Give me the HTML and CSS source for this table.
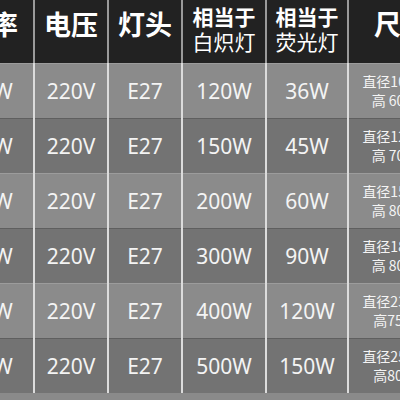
FILE: index.html
```html
<!DOCTYPE html>
<html>
<head>
<meta charset="utf-8">
<link rel="stylesheet" href="styles.css">
</head>
<body>
<div class="table">
  <div class="row head">
    <div class="cell"><span class="h1">功率</span></div>
    <div class="cell"><span class="h1">电压</span></div>
    <div class="cell"><span class="h1">灯头</span></div>
    <div class="cell two"><span class="h2b">相当于</span><span class="h2">白炽灯</span></div>
    <div class="cell two"><span class="h2b">相当于</span><span class="h2">荧光灯</span></div>
    <div class="cell"><span class="h1">尺寸</span></div>
  </div>
  <div class="row light">
    <div class="cell">24W</div><div class="cell">220V</div><div class="cell">E27</div><div class="cell">120W</div><div class="cell">36W</div>
    <div class="cell size"><span>直径100mm</span><span>高 60mm</span></div>
  </div>
  <div class="row dark">
    <div class="cell">30W</div><div class="cell">220V</div><div class="cell">E27</div><div class="cell">150W</div><div class="cell">45W</div>
    <div class="cell size"><span>直径120mm</span><span>高 70mm</span></div>
  </div>
  <div class="row light">
    <div class="cell">40W</div><div class="cell">220V</div><div class="cell">E27</div><div class="cell">200W</div><div class="cell">60W</div>
    <div class="cell size"><span>直径150mm</span><span>高 80mm</span></div>
  </div>
  <div class="row dark">
    <div class="cell">60W</div><div class="cell">220V</div><div class="cell">E27</div><div class="cell">300W</div><div class="cell">90W</div>
    <div class="cell size"><span>直径180mm</span><span>高 80mm</span></div>
  </div>
  <div class="row light">
    <div class="cell">80W</div><div class="cell">220V</div><div class="cell">E27</div><div class="cell">400W</div><div class="cell">120W</div>
    <div class="cell size"><span>直径230mm</span><span>高75mm</span></div>
  </div>
  <div class="row dark">
    <div class="cell">99W</div><div class="cell">220V</div><div class="cell">E27</div><div class="cell">500W</div><div class="cell">150W</div>
    <div class="cell size"><span>直径250mm</span><span>高80mm</span></div>
  </div>
</div>
</body>
</html>
```
FILE: styles.css
```css
html, body {
  margin: 0;
  padding: 0;
  width: 400px;
  height: 400px;
  overflow: hidden;
  background: #8a8a8a;
}
.table {
  margin-left: -51px;
  width: 530px;
  font-family: "Noto Sans", "Noto Sans CJK SC", sans-serif;
  color: #f4f4f4;
}
.row {
  display: grid;
  grid-template-columns: 84px 72px 72px 82px 80px 104px;
  column-gap: 2px;
  background: #dcdcdc;
  height: 55px;
  box-sizing: border-box;
}
.cell {
  display: flex;
  align-items: center;
  justify-content: center;
  font-size: 21px;
  white-space: nowrap;
}
.row.head { height: 63px; background: #9a9a9a; }
.row.head .cell {
  background: #222222;
  align-items: flex-start;
  color: #ffffff;
  font-family: "Noto Sans CJK SC", sans-serif;
}
.h1 {
  font-size: 27px;
  font-weight: 700;
  line-height: 32px;
  padding-top: 8px;
}
.two {
  flex-direction: column;
  align-items: center !important;
  justify-content: flex-start;
  padding-top: 4px;
}
.h2b, .h2 {
  display: block;
  font-size: 21px;
  line-height: 25px;
  height: 25px;
}
.h2b { font-weight: 700; }
.h2 { font-weight: 400; }
.light .cell { background: #8b8b8b; border-top: 1px solid #9c9c9c; }
.dark .cell { background: #737373; border-top: 1px solid #5f5f5f; }
.size {
  flex-direction: column;
  font-size: 14px;
  line-height: 19px;
  font-family: "Noto Sans CJK SC", sans-serif;
}
```
